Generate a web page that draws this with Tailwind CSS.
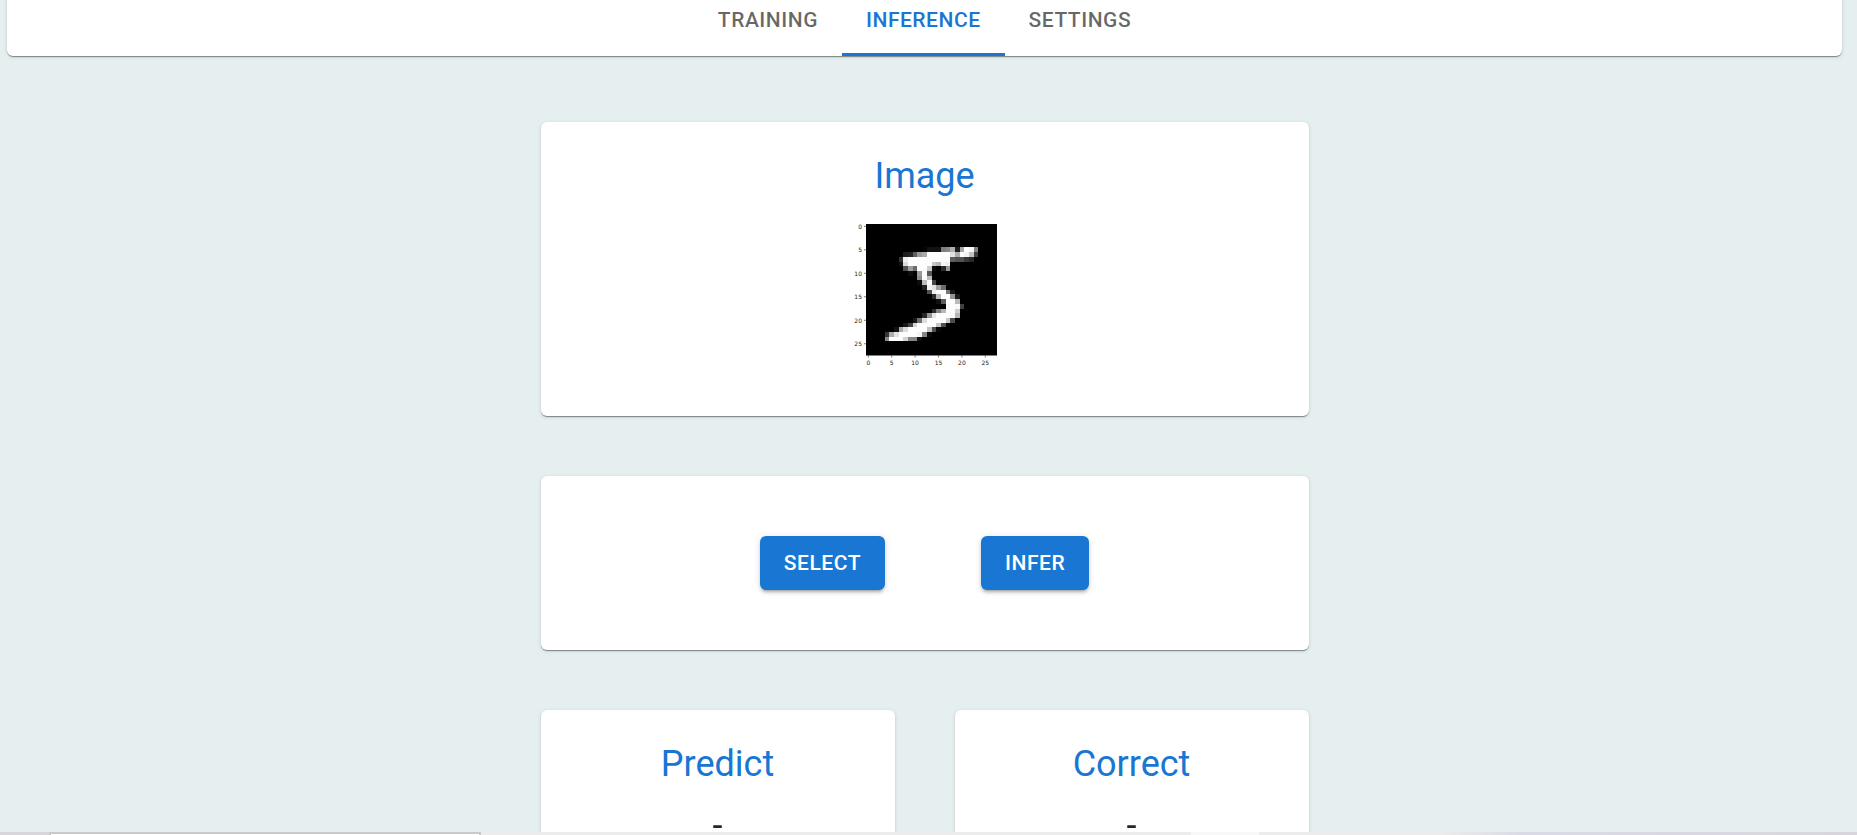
<!DOCTYPE html>
<html lang="en">
<head>
<meta charset="utf-8">
<meta name="viewport" content="width=device-width, initial-scale=1">
<title>Inference</title>
<script src="https://cdn.jsdelivr.net/npm/@tailwindcss/browser@4"></script>
</head>
<body class="flex h-screen flex-col overflow-hidden bg-[#e6eff0] font-['Roboto',sans-serif] text-black/87">
<div class="min-h-0 flex-1 overflow-hidden pr-2">
  <header class="mx-[7px] -mt-4 rounded-md bg-white shadow-[0_2px_1px_-1px_rgba(0,0,0,0.2),0_1px_1px_rgba(0,0,0,0.25),0_1px_4px_rgba(0,0,0,0.12)]">
    <nav class="flex h-18 justify-center text-[21px] font-medium tracking-wide text-black/60" role="tablist" aria-label="Sections">
      <button type="button" role="tab" aria-selected="false" class="px-6 pt-0.5">TRAINING</button>
      <button type="button" role="tab" aria-selected="true" class="border-y-3 border-t-transparent border-b-[#1976d2] px-6 pt-0.5 text-[#1976d2]">INFERENCE</button>
      <button type="button" role="tab" aria-selected="false" class="px-6 pt-0.5">SETTINGS</button>
    </nav>
  </header>

  <main class="mx-auto mt-[66px] flex max-w-3xl flex-col gap-[60px]">
    <section class="flex flex-col items-center rounded-md bg-white pt-[30px] pb-10 shadow-[0_2px_1px_-1px_rgba(0,0,0,0.2),0_1px_1px_rgba(0,0,0,0.25),0_1px_4px_rgba(0,0,0,0.12)]">
      <h2 class="text-4xl leading-12 text-[#1976d2]">Image</h2>
      <svg id="plot" class="mt-4" width="150" height="160" viewBox="0 0 150 160" role="img" aria-label="Handwritten digit">
        <svg id="digit" x="16" y="8" width="131" height="131.5" viewBox="0 0 28 28" preserveAspectRatio="none" shape-rendering="crispEdges">
          <rect width="28" height="28" fill="#000"/>
        </svg>
        <g id="axes" font-family="'DejaVu Sans', sans-serif" font-size="6" fill="#222"></g>
      </svg>
    </section>

    <section class="flex justify-center gap-24 rounded-md bg-white py-[60px] shadow-[0_2px_1px_-1px_rgba(0,0,0,0.2),0_1px_1px_rgba(0,0,0,0.25),0_1px_4px_rgba(0,0,0,0.12)]">
      <button type="button" class="h-[54px] rounded-md bg-[#1976d2] px-6 pt-0.5 text-[21px] font-medium tracking-wide text-white shadow-[0_4px_2px_-3px_rgba(0,0,0,0.2),0_3px_3px_rgba(0,0,0,0.14),0_1px_7px_rgba(0,0,0,0.12)]">SELECT</button>
      <button type="button" class="h-[54px] rounded-md bg-[#1976d2] px-6 pt-0.5 text-[21px] font-medium tracking-wide text-white shadow-[0_4px_2px_-3px_rgba(0,0,0,0.2),0_3px_3px_rgba(0,0,0,0.14),0_1px_7px_rgba(0,0,0,0.12)]">INFER</button>
    </section>

    <div class="grid grid-cols-2 gap-[60px]">
      <section class="rounded-md bg-white py-[30px] text-center shadow-[0_2px_1px_-1px_rgba(0,0,0,0.2),0_1px_1px_rgba(0,0,0,0.25),0_1px_4px_rgba(0,0,0,0.12)]">
        <h2 class="text-4xl leading-12 text-[#1976d2]">Predict</h2>
        <p class="mt-3.5 text-4xl leading-12">-</p>
      </section>
      <section class="rounded-md bg-white py-[30px] text-center shadow-[0_2px_1px_-1px_rgba(0,0,0,0.2),0_1px_1px_rgba(0,0,0,0.25),0_1px_4px_rgba(0,0,0,0.12)]">
        <h2 class="text-4xl leading-12 text-[#1976d2]">Correct</h2>
        <p class="mt-3.5 text-4xl leading-12">-</p>
      </section>
    </div>
  </main>
</div>

<!-- Top edge of the desktop taskbar -->
<footer class="flex h-[3px] shrink-0 overflow-hidden bg-[#ececec]">
  <div class="w-[49px] bg-[#d8d6db]"></div>
  <div class="w-[432px] border-2 border-b-0 border-[#c9c9c9] bg-white"></div>
  <div class="w-[710px]"></div>
  <div class="w-[68px] bg-[#f8f8f8]"></div>
  <div class="w-[181px]"></div>
  <div class="flex-1 bg-linear-to-r from-[#ececec] via-[#dadae6] via-20% to-[#d8d6dc]"></div>
</footer>

<script>
  // Grey levels of the digit: [row, first column, values...]
  const rows = [
    [5,12,3,18,18,18,126,136,175,26,166,255,247,127],
    [6,8,30,36,94,154,170,253,253,253,253,253,225,172,253,242,195,64],
    [7,7,49,238,253,253,253,253,253,253,253,253,251,93,82,82,56,39],
    [8,7,18,219,253,253,253,253,253,198,182,247,241],
    [9,8,80,156,107,253,253,205,11,0,43,154],
    [10,9,14,1,154,253,90],
    [11,11,139,253,190,2],
    [12,11,11,190,253,70],
    [13,12,35,241,225,160,108,1],
    [14,13,81,240,253,253,119,25],
    [15,14,45,186,253,253,150,27],
    [16,15,16,93,252,253,187],
    [17,17,249,253,249,64],
    [18,14,46,130,183,253,253,207,2],
    [19,12,39,148,229,253,253,253,250,182],
    [20,10,24,114,221,253,253,253,253,201,78],
    [21,8,23,66,213,253,253,253,253,198,81,2],
    [22,6,18,171,219,253,253,253,253,195,80,9],
    [23,4,55,172,226,253,253,253,253,244,133,11],
    [24,4,136,253,253,253,212,135,132,16]
  ];
  const ns = 'http://www.w3.org/2000/svg';
  function add(parent, name, attrs, text) {
    const el = document.createElementNS(ns, name);
    for (const k in attrs) el.setAttribute(k, attrs[k]);
    if (text !== undefined) el.textContent = text;
    parent.appendChild(el);
  }
  const digit = document.getElementById('digit');
  for (const [y, x0, ...values] of rows)
    values.forEach((v, i) => add(digit, 'rect', { x: x0 + i, y, width: 1, height: 1, fill: `rgb(${v},${v},${v})` }));

  const axes = document.getElementById('axes');
  for (let t = 0; t <= 25; t += 5) {
    const x = 16 + (t + 0.5) * 131 / 28;
    const y = 8 + (t + 0.5) * 131.5 / 28;
    add(axes, 'text', { x: 12, y: y + 2.5, 'text-anchor': 'end' }, t);
    add(axes, 'text', { x, y: 149, 'text-anchor': 'middle' }, t);
    add(axes, 'rect', { x: 14, y: y - 0.5, width: 2, height: 1, opacity: 0.6 });
    add(axes, 'rect', { x: x - 0.5, y: 139.5, width: 1, height: 2, opacity: 0.6 });
  }
</script>
</body>
</html>
